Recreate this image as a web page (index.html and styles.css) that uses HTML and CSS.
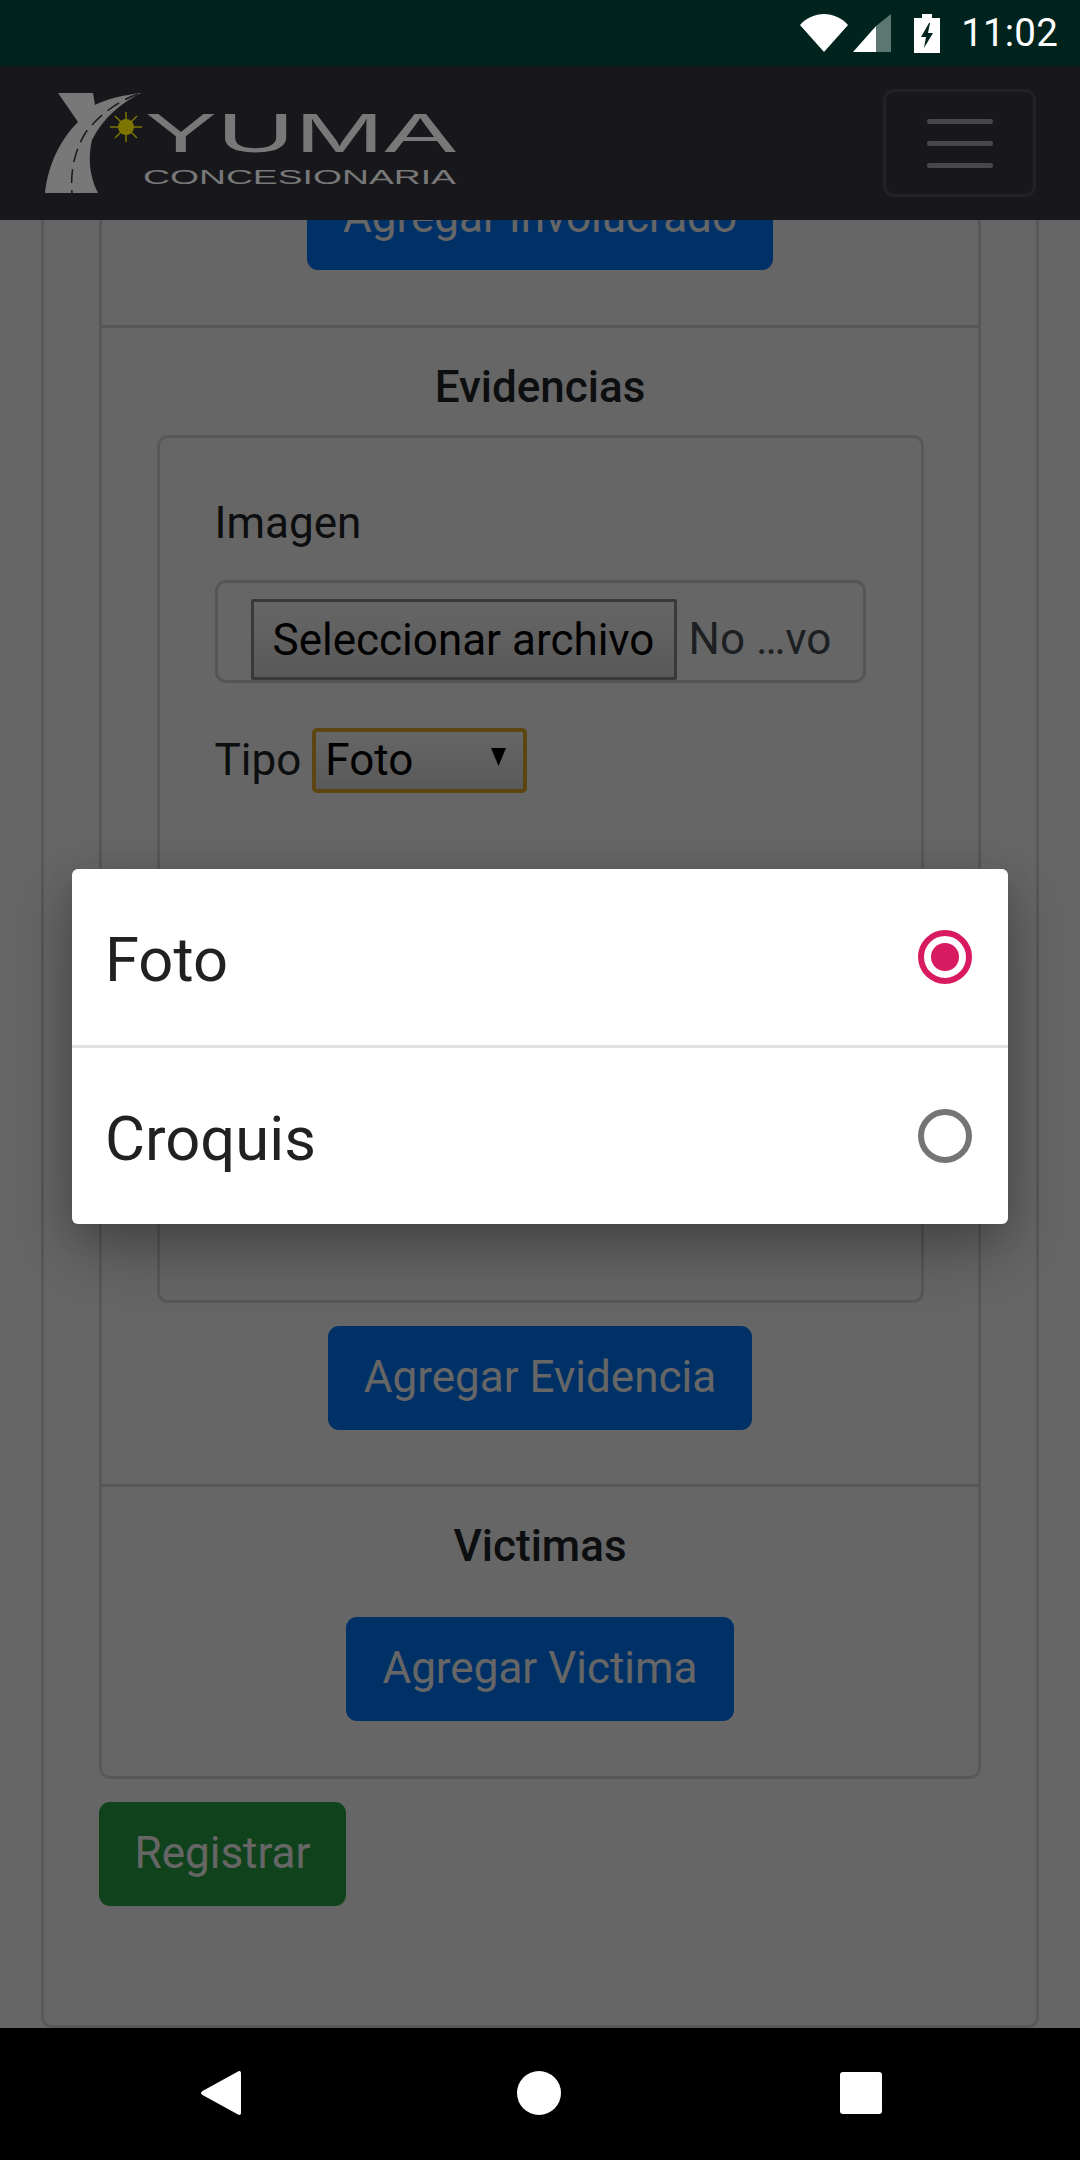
FILE: index.html
```html
<!DOCTYPE html>
<html lang="es">
<head>
<meta charset="utf-8">
<title>Yuma Concesionaria</title>
<link rel="stylesheet" href="styles.css">
</head>
<body>
<div class="phone">
  <header class="status">
    <svg class="st-wifi" viewBox="0 0 48 38"><path d="M0 11C6 4 15 0 24 0s18 4 24 11L24 38Z"/></svg>
    <svg class="st-signal" viewBox="0 0 38 38"><path class="dim" d="M23 12 38 0v38H23Z"/><path d="M0 38 23 12v26Z"/></svg>
    <svg class="st-batt" viewBox="0 0 26 39"><path fill-rule="evenodd" d="M8 0h10v4h8v35H0V4h8ZM15 9 7 23h5l-2 11 9-15h-5l2-10Z"/></svg>
    <span class="st-time">11:02</span>
  </header>
  <div class="app">
    <nav class="navbar">
      <svg class="logo" viewBox="0 0 420 110" role="img" aria-label="Yuma Concesionaria">
        <path class="logo-road" d="M16 5H51L53 17C64 11 82 7 99 5 79 15 61 30 50 52 46 68 47 88 56 105H3C6 77 18 52 36 34Z"/>
        <path class="logo-line" d="M96 6C78 12 58 26 44 44 34 60 28 80 30 105" />
        <g class="logo-sun">
          <circle cx="84" cy="39" r="8"/>
          <path d="M84 24v30M68 39h32M73 28l22 22M95 28 73 50"/>
        </g>
        <text class="logo-big" x="103" y="64" textLength="311" lengthAdjust="spacingAndGlyphs">YUMA</text>
        <text class="logo-small" x="101" y="96" textLength="313" lengthAdjust="spacingAndGlyphs">CONCESIONARIA</text>
      </svg>
      <button class="toggler" aria-label="Menu"><span></span><span></span><span></span></button>
    </nav>
    <main class="content">
      <div class="outer">
        <div class="inner">
          <section class="sec sec-first">
            <button class="btn btn-blue">Agregar Involucrado</button>
          </section>
          <section class="sec sec-ev">
            <h5 class="title">Evidencias</h5>
            <div class="card">
              <label class="label">Imagen</label>
              <div class="file">
                <button class="file-btn">Seleccionar archivo</button>
                <span class="file-name">No …vo</span>
              </div>
              <div class="tipo">
                <span class="label-inline">Tipo</span>
                <div class="select"><span>Foto</span><svg class="arrow" viewBox="0 0 15 18"><path d="M0 0h15L7.500 18Z"/></svg></div>
              </div>
            </div>
            <button class="btn btn-blue btn-ev">Agregar Evidencia</button>
          </section>
          <section class="sec sec-vic">
            <h5 class="title">Victimas</h5>
            <button class="btn btn-blue">Agregar Victima</button>
          </section>
        </div>
        <button class="btn btn-green">Registrar</button>
      </div>
    </main>
    <div class="scrim"></div>
    <div class="dialog">
      <div class="option">
        <span class="option-text">Foto</span>
        <span class="radio radio-on"></span>
      </div>
      <div class="option">
        <span class="option-text">Croquis</span>
        <span class="radio"></span>
      </div>
    </div>
  </div>
  <footer class="sysnav">
    <svg class="nav-back" viewBox="0 0 40 46"><path d="M37 1.500c1.500-1 3-.2 3 1.500v40c0 1.800-1.500 2.500-3 1.500L1.500 25c-2-1.300-2-2.700 0-4Z"/></svg>
    <span class="nav-home"></span>
    <span class="nav-recent"></span>
  </footer>
</div>
</body>
</html>
```

FILE: styles.css
```css
* { box-sizing: border-box; }
html, body { margin: 0; padding: 0; }
body { background: #000; font-family: Roboto, "Noto Sans", sans-serif; color: #212529; }

.phone { width: 1080px; height: 2160px; display: flex; flex-direction: column; overflow: hidden; }

.status { height: 66px; flex: none; background: #00231e; display: flex; align-items: center; justify-content: flex-end; padding-right: 22px; }
.status svg { fill: #fff; display: block; }
.st-wifi { width: 48px; height: 38px; margin-right: 5px; }
.st-signal { width: 38px; height: 38px; margin-right: 23px; }
.st-signal .dim { fill: #5c7672; }
.st-batt { width: 26px; height: 39px; margin-right: 21px; }
.st-time { color: #fff; font-size: 38.5px; line-height: 66px; letter-spacing: .2px; }

.app { position: relative; flex: 1; display: flex; flex-direction: column; min-height: 0; background: #fff; }

.navbar { height: 154px; flex: none; background: #3c3e46; display: flex; align-items: center; justify-content: space-between; padding: 0 44px 0 42px; }
.logo { position: relative; z-index: 3; width: 420px; height: 110px; display: block; }
.logo-road { fill: #787878; }
.logo-line { fill: none; stroke: #18191d; stroke-width: 1.500; stroke-dasharray: 14 7; }
.logo-sun circle { fill: #7c7500; }
.logo-sun path { stroke: #7c7500; stroke-width: 1.500; fill: none; }
.logo-big { font-family: "Liberation Sans", Arial, sans-serif; font-size: 55px; fill: #787878; }
.logo-small { font-family: "Liberation Sans", Arial, sans-serif; font-size: 20px; fill: #787878; }

.toggler { width: 153px; height: 108px; background: none; border: 3px solid #55565c; border-radius: 11px; display: flex; flex-direction: column; align-items: center; justify-content: center; gap: 17px; padding: 0; }
.toggler span { width: 66px; height: 5px; border-radius: 3px; background: #b4b4ba; }

.content { flex: 1; min-height: 0; overflow: hidden; background: #fff; padding: 0 41px; }
.outer { margin-top: -124px; height: 1932px; border: 3px solid #dcdcdc; border-radius: 11px; padding: 0 55px; }
.inner { border: 3px solid #dcdcdc; border-radius: 11px; }

.sec { display: flex; flex-direction: column; align-items: center; padding: 0 54px; }
.sec + .sec { border-top: 3px solid #dcdcdc; }
.sec-first { padding-top: 64px; padding-bottom: 55px; }
.sec-ev { padding-bottom: 54px; }
.sec-vic { padding-bottom: 55px; }
.title { margin: 0; font-size: 44px; font-weight: 500; line-height: 53px; padding-top: 33px; }
.sec-ev .title { margin-bottom: 21px; }
.sec-vic .title { margin-bottom: 44px; }

.btn { font-family: inherit; font-size: 44px; line-height: 66px; height: 104px; padding: 0 36px 2px; border: 0; border-radius: 11px; color: #fff; }
.btn-blue { background: #007bff; }
.btn-green { background: #28a745; margin-top: 23px; display: block; width: 247px; padding: 0 0 2px; }
.btn-ev { margin-top: 23px; }

.card { width: 767px; height: 868px; border: 3px solid #dcdcdc; border-radius: 11px; padding: 55px; }
.label { display: block; font-size: 44px; line-height: 60px; margin-bottom: 27px; }
.file { height: 103px; width: 651px; border: 3px solid #d4d4d4; border-radius: 11px; display: flex; align-items: flex-start; padding: 16px 0 0 33px; }
.file-btn { font-family: inherit; font-size: 44px; height: 81px; width: 426px; padding: 0; color: #000; background: linear-gradient(#fff, #dedede); border: 3px solid #8e8e8e; border-radius: 2px; }
.file-name { font-size: 44px; line-height: 81px; margin-left: 12px; color: #495057; }
.tipo { display: flex; align-items: center; margin-top: 44px; gap: 11px; }
.label-inline { font-size: 44px; line-height: 66px; }
.select { width: 215px; height: 65px; border: 4px solid #e6ad28; border-radius: 5px; background: linear-gradient(#fff, #dedede); display: flex; align-items: center; justify-content: space-between; padding: 0 17px 0 9px; font-size: 44px; color: #000; }
.arrow { width: 15px; height: 18px; margin-top: -6px; fill: #000; }

.scrim { position: absolute; inset: 0; z-index: 2; background: rgba(0, 0, 0, .6); }

.dialog { position: absolute; z-index: 3; top: 803px; left: 72px; width: 936px; height: 355px; background: #fff; border-radius: 6px; box-shadow: 0 26px 64px rgba(0, 0, 0, .3), 0 8px 30px rgba(0, 0, 0, .1); display: flex; flex-direction: column; }
.option { flex: 1; display: flex; align-items: center; justify-content: space-between; padding: 0 36px 0 33px; font-size: 61.500px; color: #212121; }
.option + .option { border-top: 3px solid #e0e0e0; }
.option-text { margin-top: 5px; }
.radio { width: 54px; height: 54px; border-radius: 50%; border: 6px solid #757575; display: block; }
.radio-on { border-color: #d81b60; position: relative; }
.radio-on::after { content: ""; position: absolute; inset: 7px; border-radius: 50%; background: #d81b60; }

.sysnav { height: 132px; flex: none; background: #000; display: flex; align-items: center; justify-content: space-between; padding: 0 198px 2px 201px; }
.nav-back { width: 40px; height: 46px; fill: #fff; display: block; }
.nav-home { width: 44px; height: 44px; border-radius: 50%; background: #fff; display: block; margin-right: 3px; }
.nav-recent { width: 42px; height: 42px; border-radius: 3px; background: #fff; display: block; }
```
